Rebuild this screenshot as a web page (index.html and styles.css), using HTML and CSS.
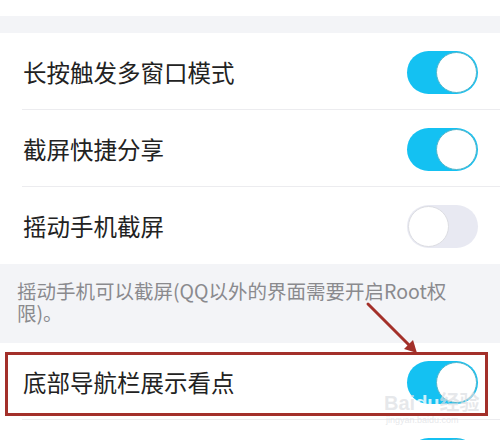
FILE: index.html
```html
<!DOCTYPE html>
<html lang="zh">
<head>
<meta charset="utf-8">
<link rel="stylesheet" href="styles.css">
</head>
<body>
<div class="page">
  <div class="top-space"></div>
  <div class="band"></div>
  <div class="group">
    <div class="row"><span class="label">长按触发多窗口模式</span><span class="toggle on"><span class="knob"></span></span></div>
    <div class="row"><span class="label">截屏快捷分享</span><span class="toggle on"><span class="knob"></span></span></div>
    <div class="row last"><span class="label">摇动手机截屏</span><span class="toggle off"><span class="knob"></span></span></div>
  </div>
  <div class="note">摇动手机可以截屏(QQ以外的界面需要开启Root权限)。</div>
  <div class="group">
    <div class="row"><span class="label">底部导航栏展示看点</span><span class="toggle on"><span class="knob"></span></span></div>
    <div class="row"><span class="label"></span><span class="toggle on"><span class="knob"></span></span></div>
  </div>
  <div class="highlight"></div>
  <svg class="arrow" width="60" height="60" viewBox="0 0 60 60">
    <line x1="4" y1="4" x2="48" y2="48" stroke="#a3302a" stroke-width="3" stroke-linecap="round"/>
    <polygon points="53,53 40,49 49,40" fill="#a3302a"/>
  </svg>
  <div class="watermark"><span class="wm-big">Bai<span class="wm-du">du</span>经验</span><span class="wm-small">jingyan.baidu.com</span></div>
</div>
</body>
</html>
```
FILE: styles.css
```css
* { box-sizing: border-box; }
html, body { margin: 0; padding: 0; }
body {
  background: #ffffff;
  font-family: "Noto Sans CJK SC", "Noto Sans", sans-serif;
  width: 500px;
  height: 440px;
  overflow: hidden;
}
.page { position: relative; width: 500px; height: 440px; overflow: hidden; }
.top-space { height: 16px; background: #fff; }
.band { height: 17px; background: #f3f4f7; }
.group { background: #fff; }
.row {
  height: 77px;
  display: flex;
  align-items: center;
  justify-content: space-between;
  padding: 2px 22px 0 23px;
  position: relative;
}
.row::after {
  content: "";
  position: absolute;
  left: 22px;
  right: 0;
  bottom: 0;
  height: 1px;
  background: #ececef;
}
.row.last::after { display: none; }
.label {
  font-size: 23.5px;
  color: #222;
  line-height: 1;
}
.toggle {
  width: 71px;
  height: 43px;
  border-radius: 22px;
  display: flex;
  align-items: center;
  padding: 0 1px;
}
.toggle.on { background: #14c1f2; justify-content: flex-end; }
.toggle.off { background: #e8e9f2; justify-content: flex-start; }
.knob {
  width: 41px;
  height: 41px;
  border-radius: 50%;
  background: #fff;
}
.toggle.on .knob { border: 1.5px solid #56b6cb; }
.toggle.off .knob { border: 1.5px solid #dcdde2; }
.note {
  background: #f3f4f7;
  color: #8a8a8e;
  font-size: 19.5px;
  line-height: 22px;
  padding: 16px 52px 19px 17px;
}
.highlight {
  position: absolute;
  left: 5px;
  top: 352px;
  width: 483px;
  height: 64px;
  border: 3px solid #a3302a;
}
.arrow {
  position: absolute;
  left: 364px;
  top: 300px;
}
.watermark {
  position: absolute;
  left: 384px;
  top: 392px;
  display: flex;
  flex-direction: column;
  color: rgba(220, 222, 226, 0.7);
  font-family: "Liberation Sans", "Noto Sans CJK SC", sans-serif;
}
.wm-big { font-size: 20px; font-weight: bold; line-height: 22px; }
.wm-du { color: rgba(255,255,255,0.8); }
.wm-small { font-size: 9px; line-height: 12px; padding-left: 2px; }
```
